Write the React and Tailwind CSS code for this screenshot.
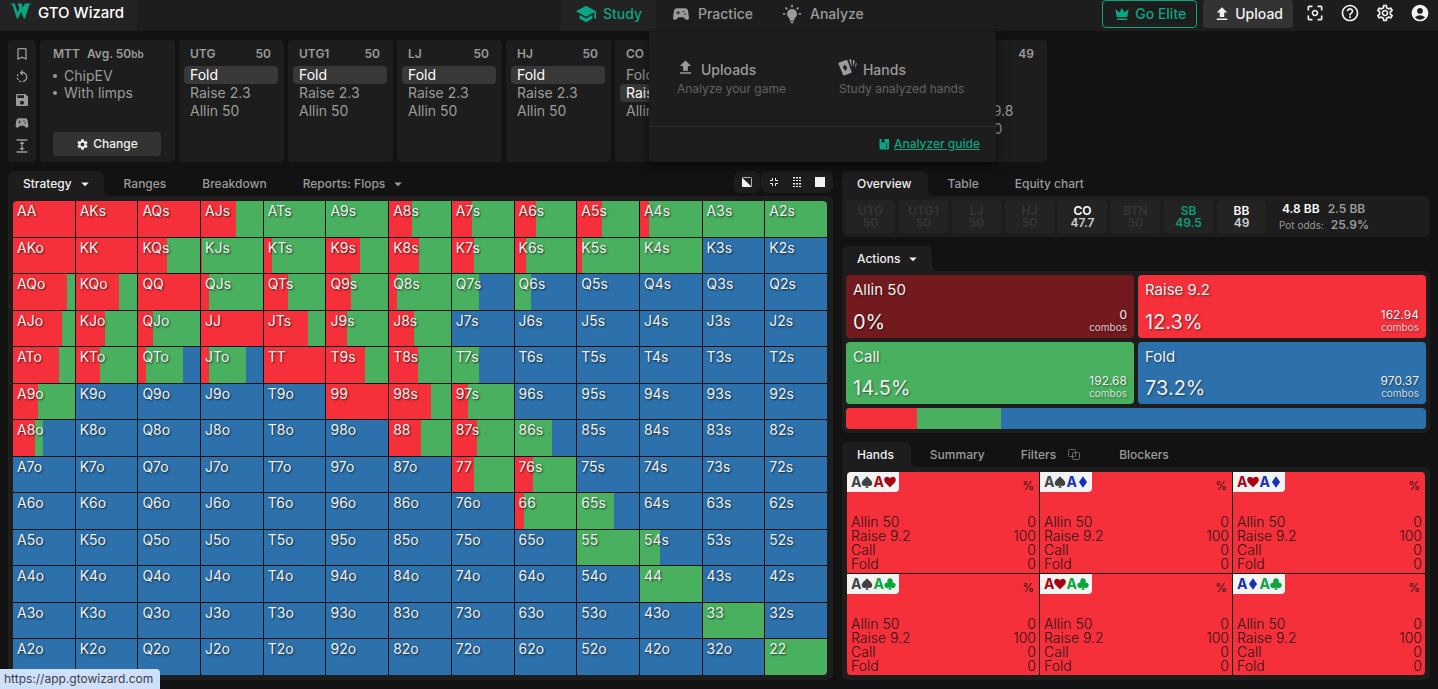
import {
  MdAccountCircle,
  MdArrowDropDown,
  MdBookmarkBorder,
  MdCenterFocusWeak,
  MdExpand,
  MdFileUpload,
  MdHelpOutline,
  MdOutlineSettings,
  MdRotateLeft,
  MdSave,
  MdSchool,
  MdSettings,
  MdSportsEsports,
} from 'react-icons/md';

const RANKS = ['A', 'K', 'Q', 'J', 'T', '9', '8', '7', '6', '5', '4', '3', '2'];

// [raise, call] share of each hand, whatever is left is a fold
const STRATEGY = {
  AA: [100, 0], AKs: [100, 0], AQs: [100, 0], AJs: [56, 44], ATs: [0, 100], A9s: [0, 100], A8s: [37, 63],
  A7s: [33, 67], A6s: [34, 66], A5s: [40, 60], A4s: [15, 85], A3s: [0, 100], A2s: [0, 100],
  AKo: [100, 0], KK: [100, 0], KQs: [47, 53], KJs: [1, 99], KTs: [13, 87], K9s: [54, 46], K8s: [48, 52],
  K7s: [36, 64], K6s: [19, 81], K5s: [8, 92], K4s: [0, 100],
  AQo: [88, 12], KQo: [71, 29], QQ: [100, 0], QJs: [13, 87], QTs: [40, 60], Q9s: [40, 60], Q8s: [13, 87],
  Q7s: [0, 44], Q6s: [0, 27],
  AJo: [80, 20], KJo: [47, 53], QJo: [24, 76], JJ: [100, 0], JTs: [71, 29], J9s: [33, 67], J8s: [40, 60],
  ATo: [74, 26], KTo: [40, 60], QTo: [12, 61], JTo: [13, 60], TT: [100, 0], T9s: [63, 37], T8s: [46, 54],
  T7s: [0, 44],
  A9o: [40, 60], 99: [100, 0], '98s': [68, 32], '97s': [26, 74],
  A8o: [36, 12], 88: [52, 48], '87s': [40, 60], '86s': [0, 61],
  77: [36, 64], '76s': [30, 70],
  66: [16, 84], '65s': [0, 60],
  55: [0, 100], '54s': [0, 33],
  44: [0, 100], 33: [0, 100], 22: [0, 100],
};

const SPOTS = [
  { name: 'UTG', stack: '50', actions: ['Fold', 'Raise 2.3', 'Allin 50'], picked: 0 },
  { name: 'UTG1', stack: '50', actions: ['Fold', 'Raise 2.3', 'Allin 50'], picked: 0 },
  { name: 'LJ', stack: '50', actions: ['Fold', 'Raise 2.3', 'Allin 50'], picked: 0 },
  { name: 'HJ', stack: '50', actions: ['Fold', 'Raise 2.3', 'Allin 50'], picked: 0 },
  { name: 'CO', actions: ['Fold', 'Raise 2.3', 'Allin 50'], picked: 1 },
  { actions: [] },
  { actions: [] },
  { stack: '49', actions: ['', '', 'Raise 9.8', 'Allin 50'] },
];

const SEATS = [
  ['UTG', '50', 'text-[#363636]'],
  ['UTG1', '50', 'text-[#363636]'],
  ['LJ', '50', 'text-[#363636]'],
  ['HJ', '50', 'text-[#363636]'],
  ['CO', '47.7', 'text-white'],
  ['BTN', '50', 'text-[#363636]'],
  ['SB', '49.5', 'text-[#0a9f7d]'],
  ['BB', '49', 'text-white'],
];

const ACTIONS = [
  { name: 'Allin 50', share: '0%', combos: '0', color: 'bg-[#731a1e]' },
  { name: 'Raise 9.2', share: '12.3%', combos: '162.94', color: 'bg-[#f6303a]' },
  { name: 'Call', share: '14.5%', combos: '192.68', color: 'bg-[#49b060]' },
  { name: 'Fold', share: '73.2%', combos: '970.37', color: 'bg-[#2c71ac]' },
];

const COMBOS = [['s', 'h'], ['s', 'd'], ['h', 'd'], ['s', 'c'], ['h', 'c'], ['d', 'c']];

const SUITS = {
  s: { color: 'text-[#424242]', path: 'M12 2C9 6 3 9 3 14.2 3 17 5 19 7.4 19c1.500 0 2.700-.6 3.500-1.600-.2 2-.9 3.600-2.400 4.600h7c-1.500-1-2.200-2.600-2.400-4.600.8 1 2 1.600 3.500 1.600 2.400 0 4.400-2 4.400-4.800C21 9 15 6 12 2z' },
  h: { color: 'text-[#a8050f]', path: 'M12 21.500C9 17.500 2 13.500 2 8.300 2 5.200 4.300 3 7.100 3 9.200 3 11 4.200 12 6c1-1.800 2.800-3 4.900-3C19.700 3 22 5.200 22 8.300c0 5.200-7 9.200-10 13.200z' },
  d: { color: 'text-[#1531b8]', path: 'M12 2l7 10-7 10-7-10z' },
  c: { color: 'text-[#0aa53a]', path: 'M12 2a4.800 4.800 0 0 0-4 7.500A4.800 4.800 0 1 0 10.900 17c-.2 2-.9 4-2.400 5h7c-1.500-1-2.200-3-2.400-5A4.800 4.800 0 1 0 16 9.500 4.800 4.800 0 0 0 12 2z' },
};

function Svg({ d, className }) {
  return (
    <svg viewBox="0 0 24 24" fill="currentColor" className={className} aria-hidden="true">
      <path d={d} />
    </svg>
  );
}

const BULB =
  'M12 6a6 6 0 0 1 6 6c0 2.220-1.210 4.160-3 5.200V19a1 1 0 0 1-1 1h-4a1 1 0 0 1-1-1v-1.800c-1.790-1.040-3-2.980-3-5.200a6 6 0 0 1 6-6m2 15v1a1 1 0 0 1-1 1h-2a1 1 0 0 1-1-1v-1h4m6-10h3v2h-3v-2M1 11h3v2H1v-2M13 1v3h-2V1h2M4.920 3.500l2.130 2.140-1.420 1.410L3.500 4.930 4.920 3.500m12.030 2.130l2.120-2.130 1.430 1.430-2.130 2.120-1.420-1.420z';
const CROWN = 'M5 16L3 5l5.500 5L12 4l3.500 6L21 5l-2 11H5m14 3c0 .6-.4 1-1 1H6c-.6 0-1-.4-1-1v-1h14v1z';

function Logo() {
  return (
    <svg viewBox="0 0 22 16" className="h-4 w-[22px] fill-[#0aa583]" aria-hidden="true">
      <path d="M0.500 0.500h4.200l3 9.200 1.600-4.600L7.600 0.500h4l1.200 4 2.200-4h6.500L19.300 2 15 15.500h-1.300l-2.700-7-2.800 7H6.900L2.500 2.200z" />
    </svg>
  );
}

function Header() {
  return (
    <header className="grid h-[31px] grid-cols-[1fr_auto_1fr] bg-[#1d1d1d]">
      <a href="#" className="flex w-[137px] items-start gap-1.5 bg-[#232323] pl-2.5 pt-[3px]">
        <Logo />
        <span className="whitespace-nowrap text-[15px] leading-5 font-medium text-white">GTO Wizard</span>
      </a>
      <nav className="flex text-sm font-medium text-[#9b9b9b]">
        <a href="#" className="flex w-[95px] items-center gap-1.5 bg-[#232323] pb-[3px] pl-3.5 text-[#0aa583]">
          <MdSchool className="size-[22px]" />
          Study
        </a>
        <a href="#" className="flex w-[112px] items-center gap-[7px] pb-[3px] pl-[15px]">
          <MdSportsEsports className="size-5" />
          Practice
        </a>
        <a href="#" className="flex w-[109px] items-center gap-2 pb-[3px] pl-3.5">
          <Svg d={BULB} className="size-5" />
          Analyze
        </a>
      </nav>
      <div className="flex items-start justify-end gap-1.5 pr-2 text-sm font-medium text-[#f1f1f1]">
        <button type="button" className="flex h-7 items-center gap-1 rounded border border-[#0aa583] px-2.5 text-[#0aa583]">
          <Svg d={CROWN} className="size-[18px]" />
          Go Elite
        </button>
        <button type="button" className="flex h-7 items-center gap-1 rounded bg-[#333] px-2.5">
          <MdFileUpload className="size-[18px]" />
          Upload
        </button>
        <div className="flex gap-[15px] pl-1.5 pt-[3px]">
          <button type="button" aria-label="Focus"><MdCenterFocusWeak className="size-5" /></button>
          <button type="button" aria-label="Help"><MdHelpOutline className="size-5" /></button>
          <button type="button" aria-label="Settings"><MdOutlineSettings className="size-5" /></button>
          <button type="button" aria-label="Account"><MdAccountCircle className="size-5" /></button>
        </div>
      </div>
    </header>
  );
}

function AnalyzeMenu() {
  return (
    <div className="absolute left-[649px] top-[31px] z-10 flex h-[131px] w-[347px] flex-col rounded bg-[#1d1d1d] shadow-[0_4px_12px_rgba(0,0,0,0.6)]">
      <div className="flex flex-1 gap-[53px] pl-7 pt-[27px]">
        <a href="#" className="block">
          <span className="flex items-start gap-1.5 text-sm leading-6 font-medium text-[#9b9b9b]">
            <MdFileUpload className="-ml-px size-[19px]" />
            Uploads
          </span>
          <span className="block text-xs leading-[14px] text-[#626262]">Analyze your game</span>
        </a>
        <a href="#" className="block">
          <span className="flex items-start gap-1.5 text-sm leading-6 font-medium text-[#9b9b9b]">
            <svg viewBox="0 0 20 20" className="-ml-px size-[19px]" fill="currentColor" aria-hidden="true">
              <path fillRule="evenodd" d="M1.200 4.800 8.600 2.100a1.200 1.200 0 0 1 1.500.7l4.200 11.600a1.200 1.200 0 0 1-.7 1.500l-6.800 2.500a1.200 1.200 0 0 1-1.500-.7L.6 6.300a1.200 1.200 0 0 1 .6-1.500zM6.800 6.800 5.200 10.300l3 3.400 1.500-3.600z" />
              <path d="M11.600 1.200l2.400.3.4 8.500zM15.600 2l2.200 1-2 6.800zM18.800 5l1.200 1-2.600 5z" />
            </svg>
            Hands
          </span>
          <span className="block text-xs leading-[14px] text-[#626262]">Study analyzed hands</span>
        </a>
      </div>
      <div className="flex h-9 items-center justify-end gap-1 border-t border-[#2c2c2c] pb-0.5 pr-4 text-[#0aa583]">
        <svg viewBox="0 0 12 12" className="size-3" fill="currentColor" aria-hidden="true">
          <path fillRule="evenodd" d="M1.500 1h2v4l1.500-1 1.500 1V1H11v10.500H3A1.500 1.500 0 0 1 1.500 10zM8 5.500h1.200v1.200H8zM8 8h1.200v2H8z" />
        </svg>
        <a href="#" className="text-xs font-medium underline">Analyzer guide</a>
      </div>
    </div>
  );
}

function SpotCard({ spot }) {
  return (
    <section className="w-[105px] shrink-0 rounded bg-[#1d1d1d] pl-[5px] pr-1.5 pt-1.5">
      <div className="flex pl-1.5 pr-[7px] text-xs leading-4 font-semibold text-[#9b9b9b]">
        <h2>{spot.name}</h2>
        <span className="ml-auto">{spot.stack}</span>
      </div>
      <ul className="mt-1 text-sm leading-[18px] text-[#9b9b9b]">
        {spot.actions.map((action, i) => (
          <li key={i} className="h-[18px]">
            {action && (
              <button
                type="button"
                className={`block h-[18px] w-full rounded px-1.5 text-left ${i === spot.picked ? 'bg-[#383838] text-white' : ''}`}
              >
                {action}
              </button>
            )}
          </li>
        ))}
      </ul>
    </section>
  );
}

function SpotBar() {
  return (
    <div className="flex h-[122px] gap-1 overflow-hidden">
      <div className="flex w-7 shrink-0 flex-col items-center justify-between rounded bg-[#1d1d1d] pb-2 pt-1.5 text-[#9b9b9b]">
        <button type="button" aria-label="Bookmark"><MdBookmarkBorder className="size-4" /></button>
        <button type="button" aria-label="Reset"><MdRotateLeft className="size-4" /></button>
        <button type="button" aria-label="Save"><MdSave className="size-4" /></button>
        <button type="button" aria-label="Practice"><MdSportsEsports className="size-4" /></button>
        <button type="button" aria-label="Expand"><MdExpand className="size-4" /></button>
      </div>
      <section className="flex w-[135px] shrink-0 flex-col rounded bg-[#1d1d1d] px-[13px] pb-1.5 pt-1.5 text-[#9b9b9b]">
        <h2 className="flex gap-[7px] whitespace-nowrap text-xs leading-4 font-semibold">
          <span>MTT</span>
          <span>Avg. 50<small className="text-[10px]">bb</small></span>
        </h2>
        <ul className="mt-[5px] text-sm leading-[17px]">
          {['ChipEV', 'With limps'].map((item) => (
            <li key={item} className="flex items-center gap-[7px]">
              <span className="size-1 rounded-full bg-[#9b9b9b]" />
              {item}
            </li>
          ))}
        </ul>
        <button
          type="button"
          className="mt-auto flex h-6 w-[108px] items-center justify-center gap-1 rounded bg-[#333] text-xs font-medium text-[#f1f1f1]"
        >
          <MdSettings className="size-[13px]" />
          Change
        </button>
      </section>
      {SPOTS.map((spot, i) => (
        <SpotCard key={i} spot={spot} />
      ))}
    </div>
  );
}

function ActiveTab({ children }) {
  return (
    <>
      <button type="button" className="flex h-[25px] items-center rounded-t-md bg-[#1d1d1d] pl-[15px] pr-[17px] text-[#f1f1f1]">
        {children}
      </button>
      <span className="size-1.5 self-end bg-[radial-gradient(circle_at_top_right,transparent_6px,#1d1d1d_6px)]" />
    </>
  );
}

function TabRow({ children }) {
  return <div className="flex h-[25px] shrink-0 text-xs font-medium text-[#9b9b9b]">{children}</div>;
}

function HandCell({ hand }) {
  const [raise, call] = STRATEGY[hand] ?? [0, 0];
  return (
    <div className="relative flex min-h-7 bg-[#2c71ac]">
      <span className="bg-[#f6303a]" style={{ width: `${raise}%` }} />
      <span className="bg-[#49b060]" style={{ width: `${call}%` }} />
      <span className="absolute left-1 top-0 text-sm leading-5 text-[#f1f1f1] [text-shadow:1px_1px_2px_rgba(0,0,0,0.7)]">{hand}</span>
    </div>
  );
}

function StrategyPanel() {
  const hands = RANKS.flatMap((row, r) =>
    RANKS.map((col, c) => (r === c ? row + col : c > r ? `${row}${col}s` : `${col}${row}o`)),
  );

  return (
    <section className="flex flex-col">
      <TabRow>
        <ActiveTab>
          Strategy
          <MdArrowDropDown className="-mr-[7px] ml-1 size-[18px]" />
        </ActiveTab>
        <button type="button" className="pl-3.5">Ranges</button>
        <button type="button" className="pl-9">Breakdown</button>
        <button type="button" className="flex items-center pl-9">
          Reports: Flops
          <MdArrowDropDown className="ml-1 size-[18px]" />
        </button>
        <div className="ml-auto flex gap-px text-[#f1f1f1]">
          <div className="flex h-[22px] w-[26px] items-center justify-center rounded-md bg-[#1d1d1d]">
            <button type="button" aria-label="Split view">
              <svg viewBox="0 0 10 10" className="size-2.5" aria-hidden="true">
                <rect x="0.500" y="0.500" width="9" height="9" rx="1" fill="none" stroke="currentColor" opacity="0.7" />
                <path d="M0 0.500 10 10H1a1 1 0 0 1-1-1z" fill="currentColor" />
              </svg>
            </button>
          </div>
          <div className="flex h-[22px] w-[72px] items-center justify-center gap-[13px] rounded-md bg-[#1d1d1d]">
            <button type="button" aria-label="Compact view">
              <svg viewBox="0 0 10 10" className="size-2.5" fill="none" stroke="currentColor" aria-hidden="true">
                <path d="M1 3.500h2.500V1M6.500 1v2.500H9M9 6.500H6.500V9M3.500 9V6.500H1" />
              </svg>
            </button>
            <button type="button" aria-label="Grid view">
              <svg viewBox="0 0 10 10" className="size-2.5" fill="currentColor" aria-hidden="true">
                {[0, 3, 6, 9].map((y) =>
                  [1, 4, 7].map((x) => <rect key={`${x}-${y}`} x={x} y={y} width="2" height="1" />),
                )}
                <path d="M1 1h2v1H1zM4 1h2v1H4zM7 1h2v1H7zM1 7h2v1H1zM4 7h2v1H4zM7 7h2v1H7z" opacity="0.500" />
              </svg>
            </button>
            <button type="button" aria-label="Full view"><span className="block size-2.5 bg-current" /></button>
          </div>
        </div>
      </TabRow>
      <div className="flex flex-1 rounded-md rounded-tl-none bg-[#1d1d1d] py-[5px] pl-[5px] pr-1.5">
        <div className="grid flex-1 grid-cols-13 grid-rows-13 gap-px overflow-hidden rounded bg-[#111]">
          {hands.map((hand) => (
            <HandCell key={hand} hand={hand} />
          ))}
        </div>
      </div>
    </section>
  );
}

function OverviewPanel() {
  return (
    <section>
      <TabRow>
        <ActiveTab>Overview</ActiveTab>
        <button type="button" className="pl-[13px]">Table</button>
        <button type="button" className="pl-9">Equity chart</button>
      </TabRow>
      <div className="flex gap-1 rounded-md rounded-tl-none bg-[#1d1d1d] p-1">
        {SEATS.map(([name, stack, color]) => (
          <div
            key={name}
            className={`flex h-[33px] w-[49px] flex-col justify-center rounded bg-[#232323] text-center text-xs leading-3 font-semibold ${color}`}
          >
            <span>{name}</span>
            <span className={color === 'text-white' ? 'text-[#d0d0d0]' : ''}>{stack}</span>
          </div>
        ))}
        <div className="pl-[9px] pt-px text-xs leading-4 font-semibold">
          <p className="flex gap-2 pl-[3px] text-[#9b9b9b]">
            <span className="text-white">4.8 BB</span>
            <span>2.5 BB</span>
          </p>
          <p className="flex items-center gap-[7px] text-[#9b9b9b]">
            <span className="text-[10px] font-normal">Pot odds:</span>
            <span>25.9%</span>
          </p>
        </div>
      </div>
    </section>
  );
}

function ActionsPanel() {
  return (
    <section>
      <TabRow>
        <ActiveTab>
          Actions
          <MdArrowDropDown className="-mr-[7px] ml-1 size-[18px]" />
        </ActiveTab>
      </TabRow>
      <div className="rounded-md rounded-tl-none bg-[#1d1d1d] p-1">
        <div className="grid h-[129px] grid-cols-2 grid-rows-2 gap-1">
          {ACTIONS.map((action) => (
            <div
              key={action.name}
              className={`flex flex-col justify-between rounded px-[7px] pb-1 pt-[5px] text-[#f1f1f1] [text-shadow:1px_1px_2px_rgba(0,0,0,0.5)] ${action.color}`}
            >
              <p className="text-[15px] leading-5">{action.name}</p>
              <div className="flex items-end justify-between">
                <span className="text-xl leading-6">{action.share}</span>
                <span className="text-right text-xs leading-[13px]">
                  {action.combos}
                  <small className="block text-[10px] opacity-80">combos</small>
                </span>
              </div>
            </div>
          ))}
        </div>
        <div className="mt-1 flex h-[21px] overflow-hidden rounded bg-[#2c71ac]">
          <span className="bg-[#f6303a]" style={{ width: '12.3%' }} />
          <span className="bg-[#49b060]" style={{ width: '14.5%' }} />
        </div>
      </div>
    </section>
  );
}

function ComboCell({ suits }) {
  return (
    <div className="flex flex-col bg-[#f6303a] text-[#2a1517]">
      <div className="flex items-start justify-between">
        <span className="flex h-5 w-[52px] items-center rounded-br bg-[#f3f3f3] pl-1 text-sm leading-5 font-bold">
          {suits.map((suit) => (
            <span key={suit} className={`flex items-center ${SUITS[suit].color}`}>
              A
              <Svg d={SUITS[suit].path} className="-mx-px size-3.5" />
            </span>
          ))}
        </span>
        <span className="pr-[5px] pt-1.5 text-xs leading-4">%</span>
      </div>
      <dl className="mt-auto pb-0.5 pl-1 pr-[3px] text-sm leading-[14px] font-light">
        {[['Allin 50', 0], ['Raise 9.2', 100], ['Call', 0], ['Fold', 0]].map(([name, value]) => (
          <div key={name} className="flex justify-between">
            <dt>{name}</dt>
            <dd>{value}</dd>
          </div>
        ))}
      </dl>
    </div>
  );
}

function HandsPanel() {
  return (
    <section className="flex flex-1 flex-col">
      <TabRow>
        <ActiveTab>Hands</ActiveTab>
        <button type="button" className="pl-[13px]">Summary</button>
        <button type="button" className="flex items-center gap-3 pl-9">
          Filters
          <svg viewBox="0 0 12 12" className="size-3" fill="none" stroke="#666" aria-hidden="true">
            <rect x="0.500" y="0.500" width="7" height="7" rx="1" />
            <rect x="4.500" y="3.500" width="7" height="7" rx="1" />
          </svg>
        </button>
        <button type="button" className="pl-[39px]">Blockers</button>
      </TabRow>
      <div className="flex flex-1 rounded-md rounded-tl-none bg-[#1d1d1d] p-[5px]">
        <div className="grid flex-1 grid-cols-3 grid-rows-2 gap-px overflow-hidden rounded bg-[#111]">
          {COMBOS.map((suits) => (
            <ComboCell key={suits.join('')} suits={suits} />
          ))}
        </div>
      </div>
    </section>
  );
}

export default function App() {
  return (
    <div className="relative flex min-h-screen flex-col bg-[#121212] font-['Inter',sans-serif]">
      <Header />
      <AnalyzeMenu />
      <main className="flex flex-1 flex-col gap-[9px] px-2 py-[9px]">
        <SpotBar />
        <div className="grid flex-1 grid-cols-[825fr_588fr] gap-[9px]">
          <StrategyPanel />
          <div className="flex flex-col gap-[9px]">
            <OverviewPanel />
            <ActionsPanel />
            <HandsPanel />
          </div>
        </div>
      </main>
      <div className="fixed bottom-0 left-0 z-20 rounded-tr bg-[#cfe0fb] py-0.5 pl-1 pr-[7px] text-xs leading-4 text-[#3a3f47]">
        https://app.gtowizard.com
      </div>
    </div>
  );
}
